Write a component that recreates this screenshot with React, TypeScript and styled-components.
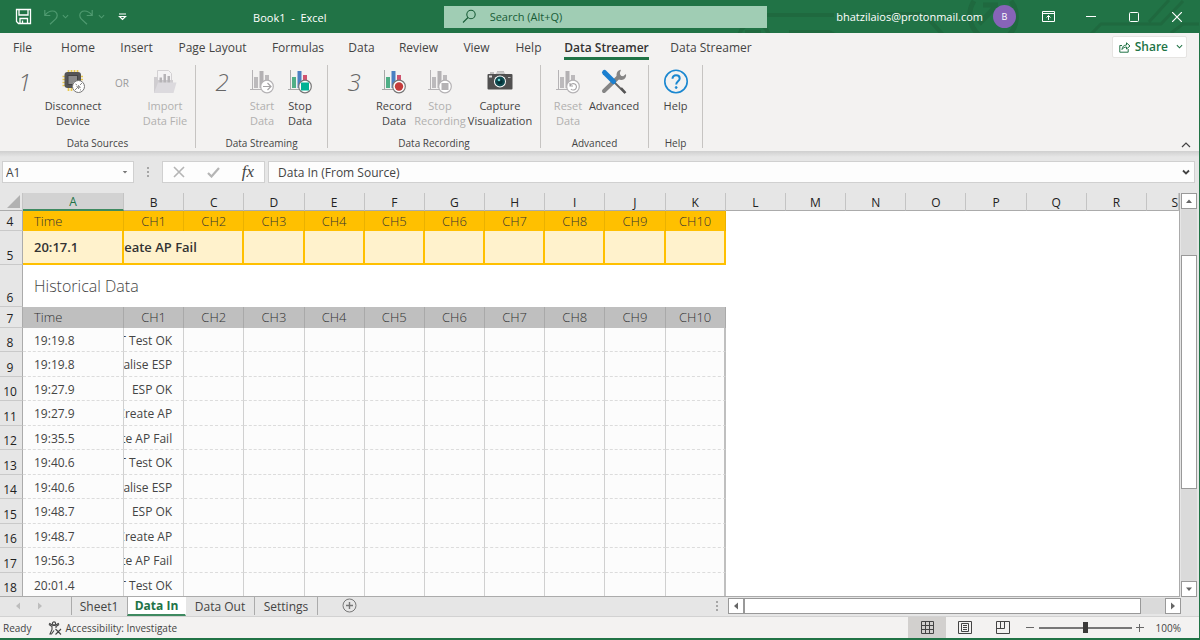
import React from "react";
import styled, { createGlobalStyle, css } from "styled-components";

const GlobalStyle = createGlobalStyle`
  * { box-sizing: border-box; }
  body { margin: 0; font-family: "Open Sans", "Noto Sans", sans-serif; font-size: 12px; color: #444; }
  button, input { font: inherit; color: inherit; margin: 0; }
  button { padding: 0; border: 0; background: none; }
  input { padding: 0; border: 0; outline: 0; min-width: 0; }
  svg { display: block; flex: none; }
`;

const Window = styled.div`
  height: 100vh;
  display: flex;
  flex-direction: column;
  background: #e6e6e6;
  border-right: 1px solid #217346;
  border-bottom: 2px solid #217346;
  overflow: hidden;
`;

/* ---------- title bar ---------- */
const TitleBar = styled.header`
  position: relative;
  flex: none;
  height: 33px;
  display: grid;
  grid-template-columns: 37fr 27fr 36fr;
  align-items: center;
  background: #217346;
  color: #fff;
  font-size: 11px;
`;
const Circuit = styled.svg`
  position: absolute;
  right: 0;
  top: 0;
`;
const TitleLeft = styled.div`
  display: flex;
  align-items: center;
`;
const QuickAccess = styled.div`
  display: flex;
  align-items: center;
  padding-left: 15px;
`;
const QuickButton = styled.button<{ $w: number; $dim?: boolean }>`
  width: ${(p) => p.$w}px;
  height: 20px;
  display: flex;
  align-items: center;
  color: ${(p) => (p.$dim ? "#4f9a70" : "#fff")};
`;
const DocTitle = styled.h1`
  flex: 1;
  margin: 0;
  padding: 2px 0 0 2px;
  text-align: center;
  font-size: 11px;
  font-weight: 400;
  white-space: pre;
`;
const SearchBox = styled.label`
  position: relative;
  display: flex;
  align-items: center;
  gap: 13px;
  height: 22px;
  padding-left: 18px;
  background: #a0cdb4;
  color: #185c37;
  input { flex: 1; background: none; }
  input::placeholder { color: #185c37; opacity: 1; }
`;
const Account = styled.div`
  position: relative;
  display: flex;
  align-items: center;
  justify-content: flex-end;
`;
const Avatar = styled.button`
  width: 23px;
  height: 23px;
  margin: 0 11px 0 10px;
  border-radius: 50%;
  background: #8764b8;
  color: #fff;
  font-size: 9px;
`;
const WindowButton = styled.button`
  width: 43px;
  height: 33px;
  display: flex;
  align-items: center;
  justify-content: center;
`;

/* ---------- ribbon ---------- */
const TabRow = styled.nav`
  flex: none;
  height: 27px;
  display: flex;
  align-items: center;
  justify-content: space-between;
  padding: 0 12px 0 0;
  background: #f3f2f1;
`;
const Tabs = styled.div`
  display: flex;
`;
const Tab = styled.button<{ $w: number; $active?: boolean }>`
  width: ${(p) => p.$w}px;
  display: flex;
  justify-content: center;
  white-space: nowrap;
  font-weight: ${(p) => (p.$active ? 600 : 400)};
  color: ${(p) => (p.$active ? "#333" : "#444")};
  span {
    line-height: 18px;
    padding-top: 5px;
    border-bottom: 3px solid ${(p) => (p.$active ? "#217346" : "transparent")};
  }
`;
const ShareButton = styled.button`
  height: 22px;
  display: flex;
  align-items: center;
  gap: 4px;
  padding: 0 3px 0 6px;
  background: #fff;
  border: 1px solid #e6e4e2;
  border-radius: 2px;
  color: #217346;
  font-weight: 600;
  svg:last-child { margin-left: 4px; }
`;
const Ribbon = styled.section`
  flex: none;
  height: 91px;
  display: flex;
  background: #f3f2f1;
`;
const Group = styled.div<{ $left?: number; $right?: number }>`
  display: flex;
  flex-direction: column;
  margin: 5px 0 3px;
  border-right: 1px solid #c6c4c2;
  > div { padding: 0 ${(p) => p.$right ?? 0}px 0 ${(p) => p.$left ?? 0}px; }
`;
const GroupItems = styled.div`
  flex: 1;
  display: flex;
  align-items: flex-start;
`;
const GroupName = styled.span`
  text-align: center;
  font-size: 10px;
  line-height: 10px;
`;
const Step = styled.span<{ $w: number }>`
  width: ${(p) => p.$w}px;
  padding-left: 5px;
  text-align: center;
  font-size: 24px;
  line-height: 34px;
  font-style: italic;
  font-weight: 300;
  color: #666;
`;
const OrText = styled.span`
  width: 40px;
  text-align: center;
  font-size: 10px;
  line-height: 36px;
  color: #999;
`;
const Tool = styled.button<{ $w: number }>`
  width: ${(p) => p.$w}px;
  display: flex;
  flex-direction: column;
  align-items: center;
  gap: 2px;
  font-size: 11px;
  line-height: 15px;
  padding-top: 3px;
  &:disabled { color: #b1b0af; }
  span { white-space: pre; }
`;
const Collapse = styled.button`
  margin-left: auto;
  align-self: flex-end;
  padding: 0 8px 3px 0;
`;

/* ---------- formula bar ---------- */
const FormulaBar = styled.section`
  flex: none;
  height: 42px;
  display: flex;
  align-items: center;
  padding: 0 4px 0 2px;
  background: linear-gradient(#cfcfcf 0, #e6e6e6 6px);
`;
const barBox = css`
  height: 22px;
  display: flex;
  align-items: center;
  background: #fdfdfd;
  border: 1px solid #d0d0d0;
`;
const NameBox = styled.div`
  ${barBox}
  width: 132px;
  padding: 0 5px 0 3px;
  input { flex: 1; background: none; }
`;
const Grip = styled.span`
  width: 28px;
  display: flex;
  justify-content: center;
`;
const EditButtons = styled.div`
  ${barBox}
  width: 103px;
  margin-right: 3px;
  justify-content: space-between;
  padding: 0 10px;
`;
const FormulaInput = styled.div`
  ${barBox}
  flex: 1;
  padding: 0 4px 0 9px;
  input { flex: 1; background: none; }
`;
const FxButton = styled.button`
  font-family: "Liberation Serif", serif;
  font-style: italic;
  font-size: 17px;
  line-height: 16px;
  color: #444;
`;

/* ---------- sheet ---------- */
const SheetArea = styled.main`
  flex: 1;
  min-height: 0;
  display: flex;
  padding-right: 2px;
`;
const Viewport = styled.div`
  flex: 1;
  min-width: 0;
  overflow: hidden;
  background: #fff;
  border-right: 1px solid #ababab;
  border-bottom: 1px solid #ababab;
`;
const Sheet = styled.table`
  width: 100%;
  table-layout: fixed;
  border-collapse: separate;
  border-spacing: 0;
  th, td { padding: 0; overflow: hidden; white-space: nowrap; }
`;
const NumberCol = styled.col`
  width: 23px;
`;
const TimeCol = styled.col`
  width: 101px;
`;
const EdgeCol = styled.col`
  width: 32px;
`;
const ColumnHead = styled.th<{ $selected?: boolean; $edge?: boolean }>`
  height: 18px;
  font-size: 12px;
  line-height: 15px;
  font-weight: 400;
  vertical-align: bottom;
  text-align: ${(p) => (p.$edge ? "right" : "center")};
  color: ${(p) => (p.$selected ? "#217346" : "#222")};
  background: ${(p) => (p.$selected ? "#d2d2d2" : "#e6e6e6")};
  border-right: 1px solid #c4c4c4;
  border-bottom: ${(p) => (p.$selected ? "2px solid #3f8a61" : "1px solid #ababab")};
`;
const Corner = styled.td`
  background: #e6e6e6;
  border-right: 1px solid #c4c4c4;
  border-bottom: 1px solid #ababab;
  svg { margin-left: 7px; }
`;
const RowHead = styled.th`
  font-size: 12px;
  line-height: 16px;
  font-weight: 400;
  color: #222;
  background: #e6e6e6;
  text-align: center;
  vertical-align: bottom;
  border-right: 1px solid #ababab;
  border-bottom: 1px solid #c9c9c9;
  && { padding-right: 2px; }
`;
const Row = styled.tr<{ $h: number }>`
  height: ${(p) => p.$h}px;
`;
const BandCell = styled.td<{ $tone: "gold" | "grey"; $first?: boolean }>`
  text-align: ${(p) => (p.$first ? "left" : "center")};
  && { padding: 0 0 1px ${(p) => (p.$first ? 11 : 0)}px; }
  font-size: 13px;
  line-height: 18px;
  font-weight: 300;
  color: #333;
  background: ${(p) => (p.$tone === "gold" ? "#ffc000" : "#bfbfbf")};
  border-right: 1px solid ${(p) => (p.$tone === "gold" ? "#eab100" : "#a9a9a9")};
`;
const LiveCell = styled.td<{ $first?: boolean }>`
  && { padding-left: ${(p) => (p.$first ? 11 : 0)}px; }
  font-size: 13px;
  font-weight: 600;
  color: #333;
  background: #fff2cc;
  border-right: 2px solid #ffc000;
  border-bottom: 2px solid #ffc000;
`;
const Spill = styled.div`
  width: 50%;
  display: flex;
  justify-content: center;
`;
const SectionTitle = styled.td`
  && { padding-left: 11px; }
  font-size: 16px;
  font-weight: 300;
  color: #444;
`;
const DataCell = styled.td<{ $last?: boolean; $time?: boolean }>`
  && { padding: 2px 0 0 ${(p) => (p.$time ? 11 : 0)}px; }
  font-size: 12px;
  line-height: 16px;
  background: #fcfcfc;
  border-right: ${(p) => (p.$last ? "2px solid #bfbfbf" : "1px solid #d0d0d0")};
  border-bottom: 1px dashed #dcdcdc;
`;
const Message = styled.div`
  display: flex;
  justify-content: flex-end;
  overflow: hidden;
  padding-right: 11px;
`;

/* ---------- scroll bars ---------- */
const VScroll = styled.div`
  width: 16px;
  margin-left: 1px;
  display: flex;
  flex-direction: column;
  background: #dadada;
`;
const ArrowButton = styled.button`
  width: 16px;
  height: 16px;
  flex: none;
  display: flex;
  align-items: center;
  justify-content: center;
  background: #fff;
  border: 1px solid #999;
`;
const Part = styled.span<{ $grow: number; $thumb?: boolean }>`
  flex: ${(p) => p.$grow} 1 0;
  ${(p) => p.$thumb && "background: #fff; border: 1px solid #999;"}
`;

/* ---------- sheet tabs ---------- */
const SheetBar = styled.footer`
  flex: none;
  height: 20px;
  display: grid;
  grid-template-columns: 728fr 471fr;
  border-bottom: 1px solid #d2d2d2;
`;
const SheetTabs = styled.div`
  display: flex;
  align-items: flex-start;
`;
const SheetNav = styled.div`
  width: 72px;
  height: 18px;
  display: flex;
  align-items: center;
  gap: 14px;
  padding-left: 14px;
  border-right: 1px solid #ababab;
`;
const SheetTab = styled.button<{ $w: number; $active?: boolean; $line?: boolean }>`
  width: ${(p) => p.$w}px;
  height: 18px;
  line-height: 17px;
  white-space: nowrap;
  border-right: 1px solid ${(p) => (p.$line ? "#ababab" : "transparent")};
  ${(p) =>
    p.$active &&
    css`
      height: 19px;
      background: #fff;
      color: #217346;
      font-weight: 700;
      border-bottom: 2px solid #3f8a61;
      border-left: 1px solid #ababab;
    `}
`;
const AddSheet = styled.button`
  height: 18px;
  padding: 1px 0 2px 24px;
`;
const SheetGrip = styled.span`
  margin-left: auto;
  padding: 4px 9px 0 0;
`;
const HScroll = styled.div`
  height: 16px;
  margin: 1px 18px 0 0;
  display: flex;
  background: #dadada;
`;

/* ---------- status bar ---------- */
const StatusBar = styled.footer`
  flex: none;
  height: 21px;
  display: flex;
  align-items: center;
  justify-content: space-between;
  padding: 0 18px 0 3px;
  background: #f3f2f1;
  font-size: 10px;
`;
const StatusSide = styled.div`
  display: flex;
  align-items: center;
`;
const AccessButton = styled.button`
  display: flex;
  align-items: center;
  gap: 3px;
  margin-left: 17px;
`;
const ViewButton = styled.button<{ $active?: boolean }>`
  width: 38px;
  height: 21px;
  display: flex;
  align-items: center;
  justify-content: center;
  background: ${(p) => (p.$active ? "#d2d0ce" : "none")};
`;
const ZoomControls = styled.div`
  display: flex;
  align-items: center;
  padding-left: 4px;
`;
const ZoomStep = styled.button`
  width: 9px;
  height: 20px;
  display: flex;
  align-items: center;
`;
const ZoomSlider = styled.input`
  appearance: none;
  width: 93px;
  height: 12px;
  margin: 0 4px;
  background: linear-gradient(#777, #777) center / 100% 2px no-repeat;
  &::-webkit-slider-thumb {
    appearance: none;
    width: 5px;
    height: 11px;
    background: #3b3a39;
  }
`;
const ZoomValue = styled.span`
  width: 36px;
  text-align: right;
`;

/* ---------- drawings ---------- */
const Chevron = ({ w = 7, sw = 1.2 }: { w?: number; sw?: number }) => (
  <svg width={w} height={w} viewBox="0 0 8 8" fill="none" stroke="currentColor" strokeWidth={sw}>
    <path d="M1 2.5 4 5.5 7 2.5" />
  </svg>
);

const Triangle = ({
  dir,
  color = "#666",
  size = 8,
}: {
  dir: "up" | "down" | "left" | "right";
  color?: string;
  size?: number;
}) => {
  const d = {
    up: "M1 6 4 2.5 7 6z",
    down: "M1 2.5 4 6 7 2.5z",
    left: "M6 0.5 2 4 6 7.5z",
    right: "M2 0.5 6 4 2 7.5z",
  }[dir];
  return (
    <svg width={size} height={size} viewBox="0 0 8 8" fill={color}>
      <path d={d} />
    </svg>
  );
};

const Dots = () => (
  <svg width="3" height="11" viewBox="0 0 3 11" fill="#a6a6a6">
    <path d="M0 0h2v2H0zM0 4h2v2H0zM0 8h2v2H0z" />
  </svg>
);

type BadgeKind = "start" | "stop" | "record" | "stopOff" | "reset";

const ChartIcon = ({ kind }: { kind: BadgeKind }) => {
  const off = kind === "start" || kind === "stopOff" || kind === "reset";
  const line = off ? "#b5b3b5" : "#777";
  const [a, b, c] = off ? ["#bcbabc", "#b3b1b3", "#bcbabc"] : ["#4fae86", "#4a7fc1", "#d0536f"];
  return (
    <svg width="28" height="28" viewBox="0 0 28 28" fill="none">
      <path d="M4.500 2v20M2 21.500h14" stroke={off ? "#b5b3b5" : "#a8a8a8"} />
      <path fill={a} d="M6 9h4v11H6z" />
      <path fill={b} d="M11.500 3h4v17h-4z" />
      <path fill={c} d="M17 7h4v11h-4z" />
      <circle cx="19" cy="18.500" r="6.300" fill="#fff" stroke={line} strokeWidth="1.200" />
      {kind === "start" && <path d="M15 18.500h8M19.500 15l3.500 3.500-3.500 3.500" stroke="#a5a3a5" strokeWidth="1.200" />}
      {kind === "stop" && <path d="M15 14.500h8v8h-8z" fill="#00b294" />}
      {kind === "record" && <circle cx="19" cy="18.500" r="4.200" fill="#c53b3b" />}
      {kind === "stopOff" && <path d="M15.500 15h7v7h-7z" fill="#b5b3b5" />}
      {kind === "reset" && (
        <path d="M16 15v3h3M16.300 17.600a3.200 3.200 0 1 1 .6 3.400" stroke="#a5a3a5" strokeWidth="1.100" />
      )}
    </svg>
  );
};

const ChipIcon = () => (
  <svg width="28" height="28" viewBox="0 0 28 28" fill="none">
    <path
      d="M9.500 2v3M12.500 2v3M15.500 2v3M18.500 2v3M3.500 8.500h3M3.500 11.500h3M3.500 14.500h3M3.500 17.500h3M21 8.500h3M21 11.500h3M9.500 20v3M12.500 20v3"
      stroke="#e8c84e"
      strokeWidth="1.700"
    />
    <rect x="5.500" y="4" width="16.500" height="16" rx="3" fill="#555" />
    <rect x="9" y="7.500" width="9.500" height="9" fill="#8a8a8a" stroke="#444" />
    <circle cx="19.500" cy="18.500" r="6" fill="#fff" stroke="#777" />
    <path d="M16 22l2-2M23 15l-2 2M17.500 18.500 20 21M19 17l2.500 2.500M16.500 16l1.500 1M21 21.500l1 .8" stroke="#888" />
    <path d="M18 18.500l1.500-1.500 2 2-1.500 1.500z" fill="#999" />
  </svg>
);

const FolderIcon = () => (
  <svg width="28" height="28" viewBox="0 0 28 28" fill="none">
    <path d="M6.500 12V2.500h11l3 3V14" fill="#f4f3f4" stroke="#d3d1d3" />
    <path d="M3 25V9h3l1 3h15v13z" fill="#cfcdd0" />
    <path d="M8.500 9.500h2.500V15H8.500zM12.500 6h2.500v9h-2.500zM16.500 8h2.500v7h-2.500z" fill="#b6b4b7" />
    <path d="M3 25l4-10.500h18.500L22.500 25z" fill="#dcdade" />
  </svg>
);

const CameraIcon = () => (
  <svg width="28" height="28" viewBox="0 0 28 28" fill="none">
    <path d="M4 5h4M11 4h7" stroke="#8a8a8a" />
    <path d="M9 7l2-3h7l2 3z" fill="#c9c9c9" />
    <rect x="1.500" y="6" width="25" height="15.500" rx="1" fill="#505050" />
    <path d="M3 8.500h3" stroke="#ddd" strokeWidth="2" />
    <circle cx="14" cy="13.500" r="6" fill="#fff" />
    <circle cx="14" cy="13.500" r="5" fill="#0d4a50" />
    <circle cx="14" cy="13.500" r="2.600" fill="#043036" />
    <circle cx="13" cy="12" r="1.300" fill="#69d3d0" />
    <path d="M22 9.500h2.500" stroke="#bbb" />
  </svg>
);

const ToolsIcon = () => (
  <svg width="28" height="28" viewBox="0 0 28 28" fill="none">
    <path d="M4 23 19 8.500" stroke="#858585" strokeWidth="4" strokeLinecap="round" />
    <path d="M17 4.500c1-1.700 2.500-2.500 4-2.700L19.800 5l.7 2.700 2.700.6 2.800-2.200c.5 2-.4 4-2 5.200-2 1.200-4 .9-5.500 0-2-1.700-2.500-4.500-1.500-6.800z" fill="#858585" />
    <path d="M13 13l8.500 8.500 3.500 3.500" stroke="#666" strokeWidth="1.800" />
    <path d="M4.500 4.500 13.500 13.500" stroke="#1b7fcf" strokeWidth="5" strokeLinecap="round" />
    <path d="M21 20l4.500 5" stroke="#555" strokeWidth="2.400" />
  </svg>
);

const HelpIcon = () => (
  <svg width="28" height="28" viewBox="0 0 28 28" fill="none" stroke="#1a87d0">
    <circle cx="14" cy="13.500" r="11.200" strokeWidth="1.600" />
    <path d="M10.500 10.800c.1-2.300 1.600-3.600 3.600-3.600s3.600 1.200 3.600 3.200c0 2.800-3.500 2.900-3.500 6" strokeWidth="2" />
    <circle cx="14.200" cy="19.500" r="1" fill="#1a87d0" strokeWidth=".8" />
  </svg>
);

const CircuitArt = () => (
  <Circuit width="470" height="33" viewBox="730 0 470 33" fill="none" stroke="#1f693f" strokeWidth="4" aria-hidden="true">
    <path d="M768 15h67M790 32h40l8 4M740 38a14 14 0 0 1 30 0M746 32h16M796 33h10" />
    <path d="M885 14h40l20 22" />
    <path d="M975 1a26 26 0 0 0 5 34M1012 1a26 26 0 0 1 -2 34" strokeWidth="5" />
    <path d="M984 5h15M998 5 980 24" strokeWidth="5" />
    <path d="M1092 34l10-10h60l22-23M1150 22l20-22M1172 33l12-9h16" strokeWidth="3" />
  </Circuit>
);

/* ---------- data ---------- */
const ribbonTabs: { name: string; w: number; active?: boolean }[] = [
  { name: "File", w: 45 },
  { name: "Home", w: 66 },
  { name: "Insert", w: 51 },
  { name: "Page Layout", w: 101 },
  { name: "Formulas", w: 70 },
  { name: "Data", w: 57 },
  { name: "Review", w: 57 },
  { name: "View", w: 59 },
  { name: "Help", w: 45 },
  { name: "Data Streamer", w: 111, active: true },
  { name: "Data Streamer", w: 98 },
];
const letters = "ABCDEFGHIJKLMNOPQR".split("");
const channels = Array.from({ length: 10 }, (_, i) => `CH${i + 1}`);
const history: [string, string][] = [
  ["19:19.8", "UART Test OK"],
  ["19:19.8", "Initialise ESP"],
  ["19:27.9", "ESP OK"],
  ["19:27.9", "Create AP"],
  ["19:35.5", "Create AP Fail"],
  ["19:40.6", "UART Test OK"],
  ["19:40.6", "Initialise ESP"],
  ["19:48.7", "ESP OK"],
  ["19:48.7", "Create AP"],
  ["19:56.3", "Create AP Fail"],
  ["20:01.4", "UART Test OK"],
];

const Band = ({ n, h, tone }: { n: number; h: number; tone: "gold" | "grey" }) => (
  <Row $h={h}>
    <RowHead scope="row">{n}</RowHead>
    <BandCell $tone={tone} $first>Time</BandCell>
    {channels.map((c) => (
      <BandCell key={c} $tone={tone}>{c}</BandCell>
    ))}
  </Row>
);

export default function App() {
  return (
    <Window>
      <GlobalStyle />
      <TitleBar>
        <CircuitArt />
        <TitleLeft>
          <QuickAccess>
            <QuickButton $w={29} aria-label="Save">
              <svg width="17" height="17" viewBox="0 0 17 17" fill="none" stroke="currentColor" strokeWidth="1.300">
                <path d="M1.500 1.500h14v14h-12l-2-2zM4 1.500v5.500h9V1.500M5 15.500v-5h7.500v5M7.500 12.500v3" />
              </svg>
            </QuickButton>
            <QuickButton $w={18} $dim aria-label="Undo">
              <svg width="14" height="16" viewBox="0 0 14 16" fill="none" stroke="currentColor" strokeWidth="1.200">
                <path d="M.8 1v5.500h5.500M1 6.300C3 3.500 5.500 2 8.500 2c3 0 4.700 2 4.700 4.500 0 1.500-.6 2.500-1.700 3.600L6 15.300" />
              </svg>
            </QuickButton>
            <QuickButton $w={17} $dim aria-label="Undo list"><Chevron /></QuickButton>
            <QuickButton $w={19} $dim aria-label="Redo">
              <svg width="14" height="16" viewBox="0 0 14 16" fill="none" stroke="currentColor" strokeWidth="1.200">
                <path d="M13.200 1v5.500H7.700M13 6.300C11 3.500 8.500 2 5.500 2 2.500 2 .8 4 .8 6.500c0 1.500.6 2.500 1.700 3.600L8 15.300" />
              </svg>
            </QuickButton>
            <QuickButton $w={20} $dim aria-label="Redo list"><Chevron /></QuickButton>
            <QuickButton $w={16} aria-label="Customize Quick Access Toolbar">
              <svg width="9" height="8" viewBox="0 0 9 8" fill="none" stroke="currentColor" strokeWidth="1.200">
                <path d="M1 1h7M1.500 3.500h6L4.500 6.500z" />
              </svg>
            </QuickButton>
          </QuickAccess>
          <DocTitle>Book1  -  Excel</DocTitle>
        </TitleLeft>
        <SearchBox>
          <svg width="15" height="15" viewBox="0 0 15 15" fill="none" stroke="currentColor" strokeWidth="1.100">
            <circle cx="9" cy="5.500" r="4.200" />
            <path d="M6 8.500 1 13.500" />
          </svg>
          <input type="search" placeholder="Search (Alt+Q)" aria-label="Search" />
        </SearchBox>
        <Account>
          <span>bhatzilaios@protonmail.com</span>
          <Avatar aria-label="Account">B</Avatar>
          <WindowButton aria-label="Ribbon display options">
            <svg width="13" height="11" viewBox="0 0 13 11" fill="none" stroke="currentColor">
              <path d="M.5.500h12v10H.5zM.5 2.500h12M6.500 9V4.500M4.500 6.500l2-2 2 2" />
            </svg>
          </WindowButton>
          <WindowButton aria-label="Minimize">
            <svg width="10" height="10" viewBox="0 0 10 10" stroke="currentColor"><path d="M0 4.500h10" /></svg>
          </WindowButton>
          <WindowButton aria-label="Maximize">
            <svg width="10" height="10" viewBox="0 0 10 10" fill="none" stroke="currentColor">
              <rect x=".5" y=".5" width="9" height="9" rx="1" />
            </svg>
          </WindowButton>
          <WindowButton aria-label="Close">
            <svg width="10" height="10" viewBox="0 0 10 10" stroke="currentColor" strokeWidth="1.200"><path d="M0 0 10 10M10 0 0 10" /></svg>
          </WindowButton>
        </Account>
      </TitleBar>

      <TabRow>
        <Tabs>
          {ribbonTabs.map((t, i) => (
            <Tab key={i} $w={t.w} $active={t.active}><span>{t.name}</span></Tab>
          ))}
        </Tabs>
        <ShareButton>
          <svg width="12" height="12" viewBox="0 0 12 12" fill="none" stroke="currentColor">
            <path d="M3 4.500H.8v6.700h8.400V8M3 8.500C3.200 5.500 5 4 7.500 4V1.800L11 5 7.500 8V6C5.500 6 4 6.800 3 8.500z" />
          </svg>
          Share
          <Chevron />
        </ShareButton>
      </TabRow>

      <Ribbon>
        <Group $right={7}>
          <GroupItems>
            <Step $w={44}>1</Step>
            <Tool $w={58}><ChipIcon /><span>{"Disconnect\nDevice"}</span></Tool>
            <OrText>OR</OrText>
            <Tool $w={46} disabled><FolderIcon /><span>{"Import\nData File"}</span></Tool>
          </GroupItems>
          <GroupName>Data Sources</GroupName>
        </Group>
        <Group $right={8}>
          <GroupItems>
            <Step $w={47}>2</Step>
            <Tool $w={38} disabled><ChartIcon kind="start" /><span>{"Start\nData"}</span></Tool>
            <Tool $w={38}><ChartIcon kind="stop" /><span>{"Stop\nData"}</span></Tool>
          </GroupItems>
          <GroupName>Data Streaming</GroupName>
        </Group>
        <Group $right={7}>
          <GroupItems>
            <Step $w={47}>3</Step>
            <Tool $w={38}><ChartIcon kind="record" /><span>{"Record\nData"}</span></Tool>
            <Tool $w={54} disabled><ChartIcon kind="stopOff" /><span>{"Stop\nRecording"}</span></Tool>
            <Tool $w={66}><CameraIcon /><span>{"Capture\nVisualization"}</span></Tool>
          </GroupItems>
          <GroupName>Data Recording</GroupName>
        </Group>
        <Group $left={7} $right={8}>
          <GroupItems>
            <Tool $w={40} disabled><ChartIcon kind="reset" /><span>{"Reset\nData"}</span></Tool>
            <Tool $w={52}><ToolsIcon /><span>Advanced</span></Tool>
          </GroupItems>
          <GroupName>Advanced</GroupName>
        </Group>
        <Group>
          <GroupItems>
            <Tool $w={53}><HelpIcon /><span>Help</span></Tool>
          </GroupItems>
          <GroupName>Help</GroupName>
        </Group>
        <Collapse aria-label="Collapse the ribbon">
          <svg width="10" height="6" viewBox="0 0 10 6" fill="none" stroke="#444" strokeWidth="1.200"><path d="M1 5l4-4 4 4" /></svg>
        </Collapse>
      </Ribbon>

      <FormulaBar>
        <NameBox>
          <input aria-label="Name box" defaultValue="A1" />
          <button aria-label="Names"><Triangle dir="down" color="#777" size={6} /></button>
        </NameBox>
        <Grip><Dots /></Grip>
        <EditButtons>
          <button aria-label="Cancel">
            <svg width="12" height="12" viewBox="0 0 12 12" stroke="#b5b5b5" strokeWidth="1.600"><path d="M1 1l10 10M11 1 1 11" /></svg>
          </button>
          <button aria-label="Enter">
            <svg width="13" height="11" viewBox="0 0 13 11" fill="none" stroke="#b5b5b5" strokeWidth="2.200"><path d="M1 6l3.500 3.500L12 1" /></svg>
          </button>
          <FxButton aria-label="Insert function">fx</FxButton>
        </EditButtons>
        <FormulaInput>
          <input aria-label="Formula bar" defaultValue="Data In (From Source)" />
          <button aria-label="Expand formula bar"><Chevron w={8} sw={1.8} /></button>
        </FormulaInput>
      </FormulaBar>

      <SheetArea>
        <Viewport>
          <Sheet>
            <colgroup>
              <NumberCol />
              <TimeCol />
              {letters.slice(1).map((l) => <col key={l} />)}
              <EdgeCol />
            </colgroup>
            <thead>
              <tr>
                <Corner>
                  <svg width="13" height="13" viewBox="0 0 13 13" fill="#b1b1b1"><path d="M13 0v13H0z" /></svg>
                </Corner>
                {letters.map((l) => (
                  <ColumnHead key={l} scope="col" $selected={l === "A"}>{l}</ColumnHead>
                ))}
                <ColumnHead scope="col" $edge>S</ColumnHead>
              </tr>
            </thead>
            <tbody>
              <Band n={4} h={20} tone="gold" />
              <Row $h={34}>
                <RowHead scope="row">5</RowHead>
                <LiveCell $first>20:17.1</LiveCell>
                <LiveCell colSpan={2}><Spill>Create AP Fail</Spill></LiveCell>
                {channels.slice(2).map((c) => <LiveCell key={c} />)}
              </Row>
              <Row $h={42}>
                <RowHead scope="row">6</RowHead>
                <SectionTitle colSpan={11}>Historical Data</SectionTitle>
              </Row>
              <Band n={7} h={21} tone="grey" />
              {history.map(([time, text], i) => (
                <Row key={i} $h={24 + (i % 2)}>
                  <RowHead scope="row">{i + 8}</RowHead>
                  <DataCell $time>{time}</DataCell>
                  <DataCell><Message>{text}</Message></DataCell>
                  {channels.slice(1).map((c) => <DataCell key={c} $last={c === "CH10"} />)}
                </Row>
              ))}
            </tbody>
          </Sheet>
        </Viewport>
        <VScroll>
          <ArrowButton aria-label="Scroll up"><Triangle dir="up" /></ArrowButton>
          <Part $grow={46} />
          <Part $grow={234} $thumb />
          <Part $grow={93} />
          <ArrowButton aria-label="Scroll down"><Triangle dir="down" /></ArrowButton>
        </VScroll>
      </SheetArea>

      <SheetBar>
        <SheetTabs>
          <SheetNav>
            <Triangle dir="left" color="#bdbdbd" />
            <Triangle dir="right" color="#bdbdbd" />
          </SheetNav>
          <SheetTab $w={55}>Sheet1</SheetTab>
          <SheetTab $w={59} $active>Data In</SheetTab>
          <SheetTab $w={69} $line>Data Out</SheetTab>
          <SheetTab $w={63} $line>Settings</SheetTab>
          <AddSheet aria-label="New sheet">
            <svg width="15" height="15" viewBox="0 0 15 15" fill="none" stroke="#777">
              <circle cx="7.500" cy="7.500" r="6.500" />
              <path d="M7.500 4v7M4 7.500h7" strokeWidth="1.400" />
            </svg>
          </AddSheet>
          <SheetGrip><Dots /></SheetGrip>
        </SheetTabs>
        <HScroll>
          <ArrowButton aria-label="Scroll left"><Triangle dir="left" /></ArrowButton>
          <Part $grow={397} $thumb />
          <Part $grow={24} />
          <ArrowButton aria-label="Scroll right"><Triangle dir="right" /></ArrowButton>
        </HScroll>
      </SheetBar>

      <StatusBar>
        <StatusSide>
          <span>Ready</span>
          <AccessButton>
            <svg width="14" height="14" viewBox="0 0 14 14" fill="none" stroke="#444" strokeWidth="1.100">
              <circle cx="6" cy="2.500" r="1.600" />
              <path d="M1 3.500 4 5.500v3L2 13h1.500L6 9.500M11 3.500 8 5.500V7M1 3.500l.8-1L5 4.500h2l3.300-2 .7 1M7.500 8l5.500 5.500M13 8l-5.500 5.500" />
            </svg>
            Accessibility: Investigate
          </AccessButton>
        </StatusSide>
        <StatusSide>
          <ViewButton $active aria-label="Normal view">
            <svg width="13" height="13" viewBox="0 0 13 13" fill="none" stroke="#444"><path d="M.5.500h12v12H.5zM.5 4.500h12M.5 8.500h12M4.500.500v12M8.500.500v12" /></svg>
          </ViewButton>
          <ViewButton aria-label="Page layout view">
            <svg width="14" height="13" viewBox="0 0 14 13" fill="none" stroke="#444"><path d="M.5.500h13v12H.5zM3.500 2.500h7v8h-7zM5 4.500h4M5 6.500h4M5 8.500h4" /></svg>
          </ViewButton>
          <ViewButton aria-label="Page break preview">
            <svg width="14" height="13" viewBox="0 0 14 13" fill="none" stroke="#444"><path d="M.5.500h13v12H.5zM.5 7.500h8v-7M4.500.500v7" /></svg>
          </ViewButton>
          <ZoomControls>
            <ZoomStep aria-label="Zoom out">
              <svg width="8" height="8" viewBox="0 0 8 8" stroke="#666"><path d="M0 3.500h8" /></svg>
            </ZoomStep>
            <ZoomSlider type="range" aria-label="Zoom" defaultValue={50} />
            <ZoomStep aria-label="Zoom in">
              <svg width="8" height="8" viewBox="0 0 8 8" stroke="#666"><path d="M0 3.500h8M3.500 0v8" /></svg>
            </ZoomStep>
            <ZoomValue>100%</ZoomValue>
          </ZoomControls>
        </StatusSide>
      </StatusBar>
    </Window>
  );
}
